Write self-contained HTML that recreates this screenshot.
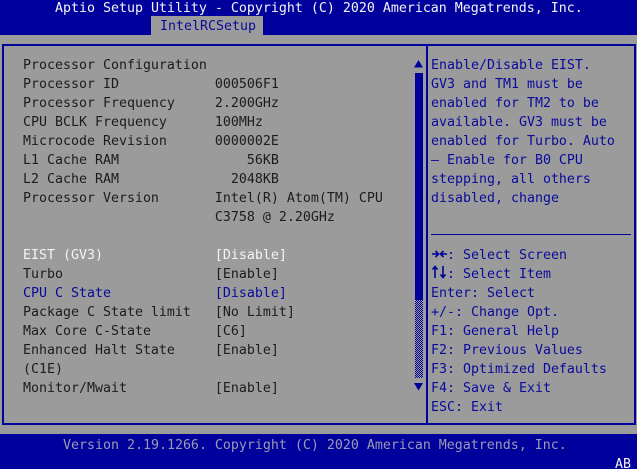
<!DOCTYPE html>
<html>
<head>
<meta charset="utf-8">
<style>
html,body{margin:0;padding:0;width:637px;height:469px;overflow:hidden;background:#9b9b9b}
body{position:relative;font-family:"DejaVu Sans Mono","Liberation Mono",monospace;font-size:13.29px;line-height:19px;color:#1c1c1c}
.b{position:absolute;background:#00009c}
.t{position:absolute;white-space:pre;height:19px;transform:translateY(2px)}
.w{color:#f4f4f4}
.u{color:#0a0a9c}
.g{color:#9b9bb0}
</style>
</head>
<body>
<div class="b" style="left:0;top:0;width:637px;height:35px"></div>
<div class="b" style="left:0;top:434px;width:637px;height:35px"></div>
<div style="position:absolute;left:151px;top:16px;width:112px;height:19px;background:#9b9b9b"></div>

<div class="b" style="left:2px;top:44px;width:633px;height:2px"></div>
<div class="b" style="left:2px;top:423px;width:633px;height:2px"></div>
<div class="b" style="left:2px;top:44px;width:2px;height:381px"></div>
<div class="b" style="left:634px;top:44px;width:2px;height:381px"></div>
<div class="b" style="left:426px;top:44px;width:2px;height:381px"></div>
<div class="b" style="left:431px;top:234px;width:200px;height:1px"></div>

<svg style="position:absolute;left:414px;top:60px" width="9" height="8"><path d="M4.5 0L9 7.5H0Z" fill="#00009c"/></svg>
<div class="b" style="left:415px;top:73px;width:8px;height:227px"></div>
<div style="position:absolute;left:415px;top:300px;width:8px;height:78px;background:repeating-conic-gradient(#00009c 0 25%,#9b9b9b 0 50%) 0 0/2px 2px"></div>
<svg style="position:absolute;left:414px;top:383px" width="9" height="8"><path d="M0 0H9L4.5 7.5Z" fill="#00009c"/></svg>

<div class="t w" style="left:55px;top:-3px">Aptio Setup Utility - Copyright (C) 2020 American Megatrends, Inc.</div>
<div class="t u" style="left:160px;top:15px">IntelRCSetup</div>

<div class="t" style="left:23px;top:54px">Processor Configuration</div>
<div class="t" style="left:23px;top:73px">Processor ID            000506F1</div>
<div class="t" style="left:23px;top:92px">Processor Frequency     2.200GHz</div>
<div class="t" style="left:23px;top:111px">CPU BCLK Frequency      100MHz</div>
<div class="t" style="left:23px;top:130px">Microcode Revision      0000002E</div>
<div class="t" style="left:23px;top:149px">L1 Cache RAM                56KB</div>
<div class="t" style="left:23px;top:168px">L2 Cache RAM              2048KB</div>
<div class="t" style="left:23px;top:187px">Processor Version       Intel(R) Atom(TM) CPU</div>
<div class="t" style="left:23px;top:206px">                        C3758 @ 2.20GHz</div>

<div class="t w" style="left:23px;top:244px">EIST (GV3)              [Disable]</div>
<div class="t" style="left:23px;top:263px">Turbo                   [Enable]</div>
<div class="t u" style="left:23px;top:282px">CPU C State             [Disable]</div>
<div class="t" style="left:23px;top:301px">Package C State limit   [No Limit]</div>
<div class="t" style="left:23px;top:320px">Max Core C-State        [C6]</div>
<div class="t" style="left:23px;top:339px">Enhanced Halt State     [Enable]</div>
<div class="t" style="left:23px;top:358px">(C1E)</div>
<div class="t" style="left:23px;top:377px">Monitor/Mwait           [Enable]</div>

<div class="t u" style="left:431px;top:54px">Enable/Disable EIST.</div>
<div class="t u" style="left:431px;top:73px">GV3 and TM1 must be</div>
<div class="t u" style="left:431px;top:92px">enabled for TM2 to be</div>
<div class="t u" style="left:431px;top:111px">available. GV3 must be</div>
<div class="t u" style="left:431px;top:130px">enabled for Turbo. Auto</div>
<div class="t u" style="left:431px;top:149px">– Enable for B0 CPU</div>
<div class="t u" style="left:431px;top:168px">stepping, all others</div>
<div class="t u" style="left:431px;top:187px">disabled, change</div>

<svg style="position:absolute;left:431px;top:248px" width="17" height="12" fill="none" stroke="#00009c" stroke-width="1.6"><path d="M1 6H7M4.5 3L7.5 6L4.5 9M16 6H10M12.5 3L9.5 6L12.5 9"/></svg>
<svg style="position:absolute;left:431px;top:265px" width="17" height="14" fill="none" stroke="#00009c" stroke-width="1.6"><path d="M4 13V2M1.5 4.5L4 1.5L6.5 4.5M12 1V12M9.5 9.5L12 12.5L14.5 9.5"/></svg>
<div class="t u" style="left:447px;top:244px">: Select Screen</div>
<div class="t u" style="left:447px;top:263px">: Select Item</div>
<div class="t u" style="left:431px;top:282px">Enter: Select</div>
<div class="t u" style="left:431px;top:301px">+/-: Change Opt.</div>
<div class="t u" style="left:431px;top:320px">F1: General Help</div>
<div class="t u" style="left:431px;top:339px">F2: Previous Values</div>
<div class="t u" style="left:431px;top:358px">F3: Optimized Defaults</div>
<div class="t u" style="left:431px;top:377px">F4: Save &amp; Exit</div>
<div class="t u" style="left:431px;top:396px">ESC: Exit</div>

<div class="t g" style="left:63px;top:434px">Version 2.19.1266. Copyright (C) 2020 American Megatrends, Inc.</div>
<div class="t w" style="left:615px;top:453px">AB</div>
</body>
</html>
